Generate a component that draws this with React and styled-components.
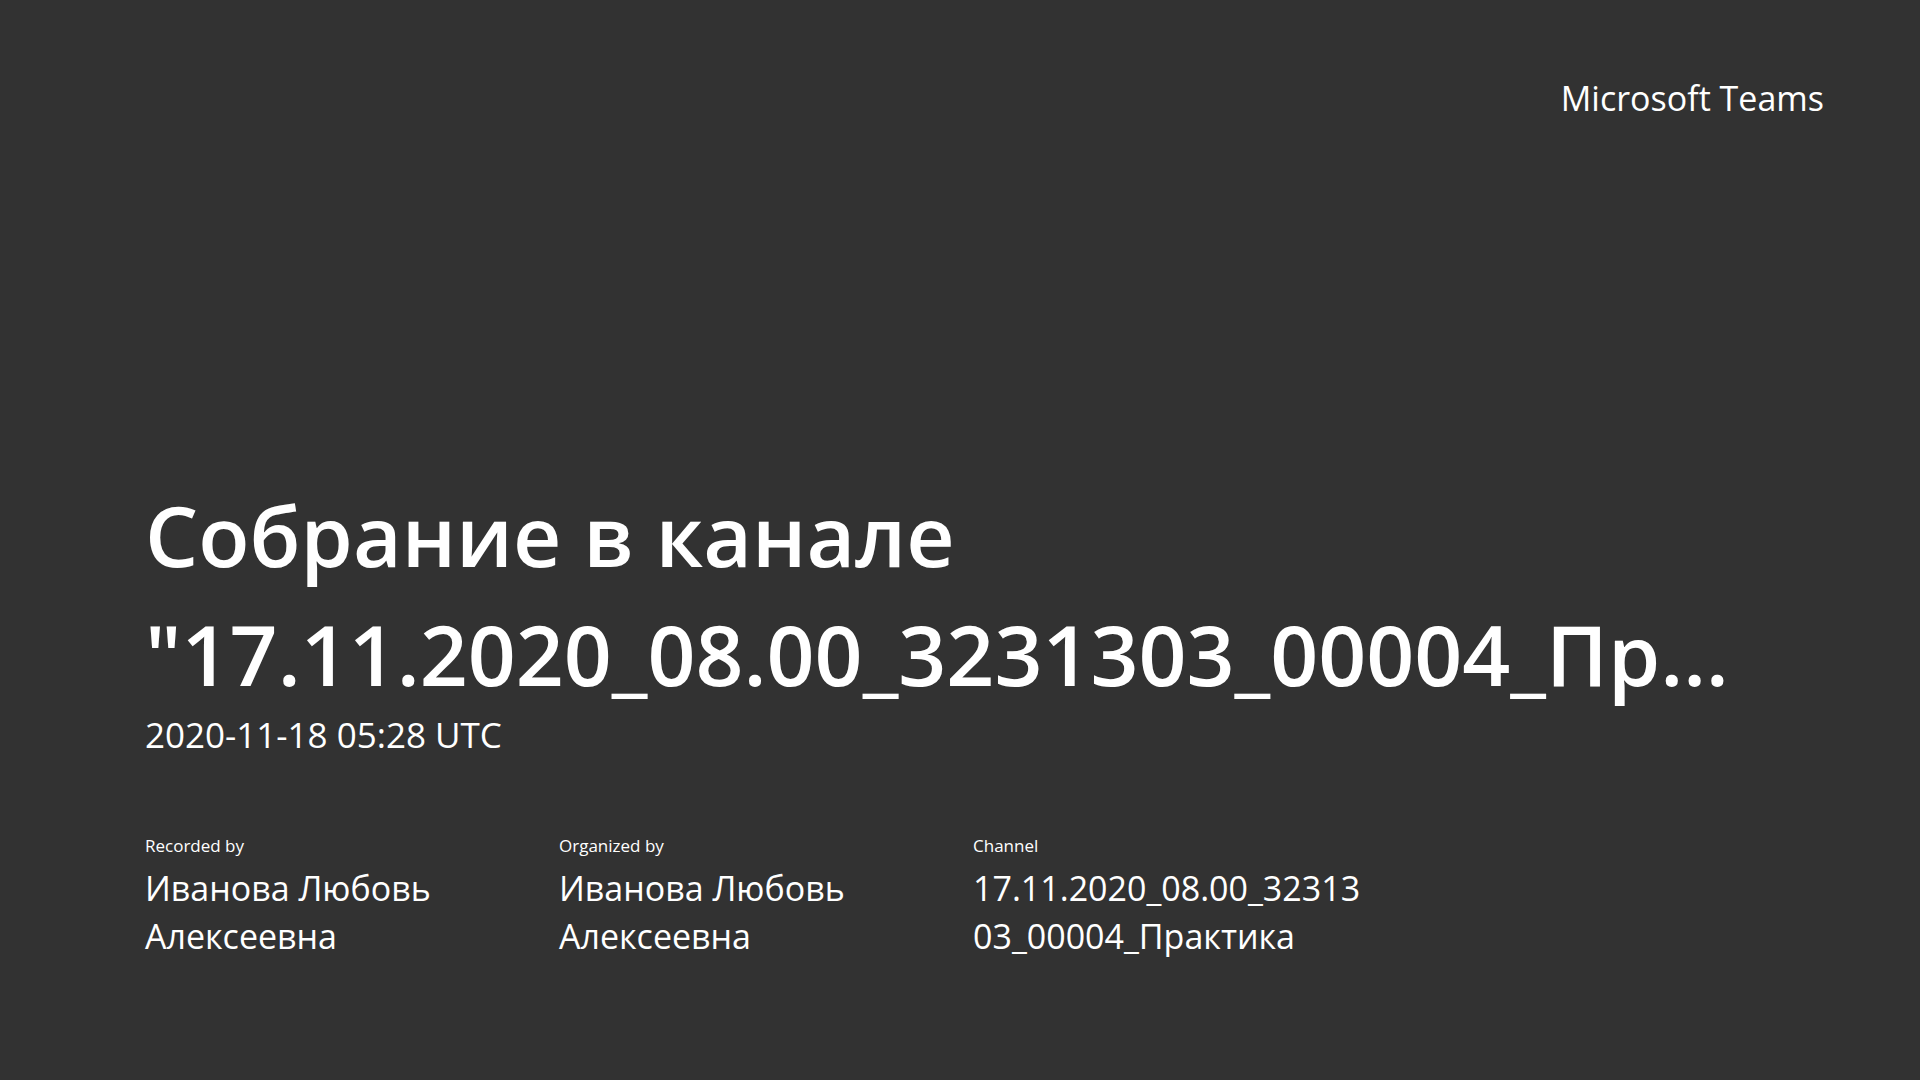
import React from 'react';
import styled, { createGlobalStyle } from 'styled-components';

const GlobalStyle = createGlobalStyle`
    html, body {
        margin: 0;
        padding: 0;
        background-color: #323232;
    }
`;

const Slide = styled.div`
    display: flex;
    flex-direction: column;
    justify-content: space-between;
    box-sizing: border-box;
    width: 1920px;
    height: 1080px;
    padding: 76px 96px 120px 145px;
    background-color: #323232;
    color: #ffffff;
    font-family: "Open Sans", "Noto Sans", sans-serif;
    overflow: hidden;
`;

const Brand = styled.div`
    align-self: flex-end;
    font-size: 34px;
    line-height: 44px;
`;

const Title = styled.h1`
    display: -webkit-box;
    -webkit-box-orient: vertical;
    -webkit-line-clamp: 2;
    overflow: hidden;
    margin: 0;
    width: 1600px;
    font-size: 84px;
    font-weight: 600;
    line-height: 119px;
    overflow-wrap: anywhere;
`;

const DateLine = styled.div`
    font-size: 35px;
    line-height: 44px;
    margin-bottom: 77px;
`;

const Details = styled.div`
    display: flex;
`;

const Detail = styled.div`
    width: 414px;
`;

const Label = styled.div`
    font-size: 17px;
    line-height: 24px;
    margin-bottom: 6px;
`;

const Value = styled.div`
    width: 395px;
    font-size: 34px;
    line-height: 48px;
    overflow-wrap: anywhere;
`;

const details = [
    { label: 'Recorded by', value: 'Иванова Любовь Алексеевна' },
    { label: 'Organized by', value: 'Иванова Любовь Алексеевна' },
    { label: 'Channel', value: '17.11.2020_08.00_3231303_00004_Практика' },
];

export default function App() {
    return (
        <>
            <GlobalStyle />
            <Slide>
                <Brand>Microsoft Teams</Brand>
                <div>
                    <Title>Собрание в канале "17.11.2020_08.00_3231303_00004_Практика"</Title>
                    <DateLine>2020-11-18 05:28 UTC</DateLine>
                    <Details>
                        {details.map((item) => (
                            <Detail key={item.label}>
                                <Label>{item.label}</Label>
                                <Value>{item.value}</Value>
                            </Detail>
                        ))}
                    </Details>
                </div>
            </Slide>
        </>
    );
}
